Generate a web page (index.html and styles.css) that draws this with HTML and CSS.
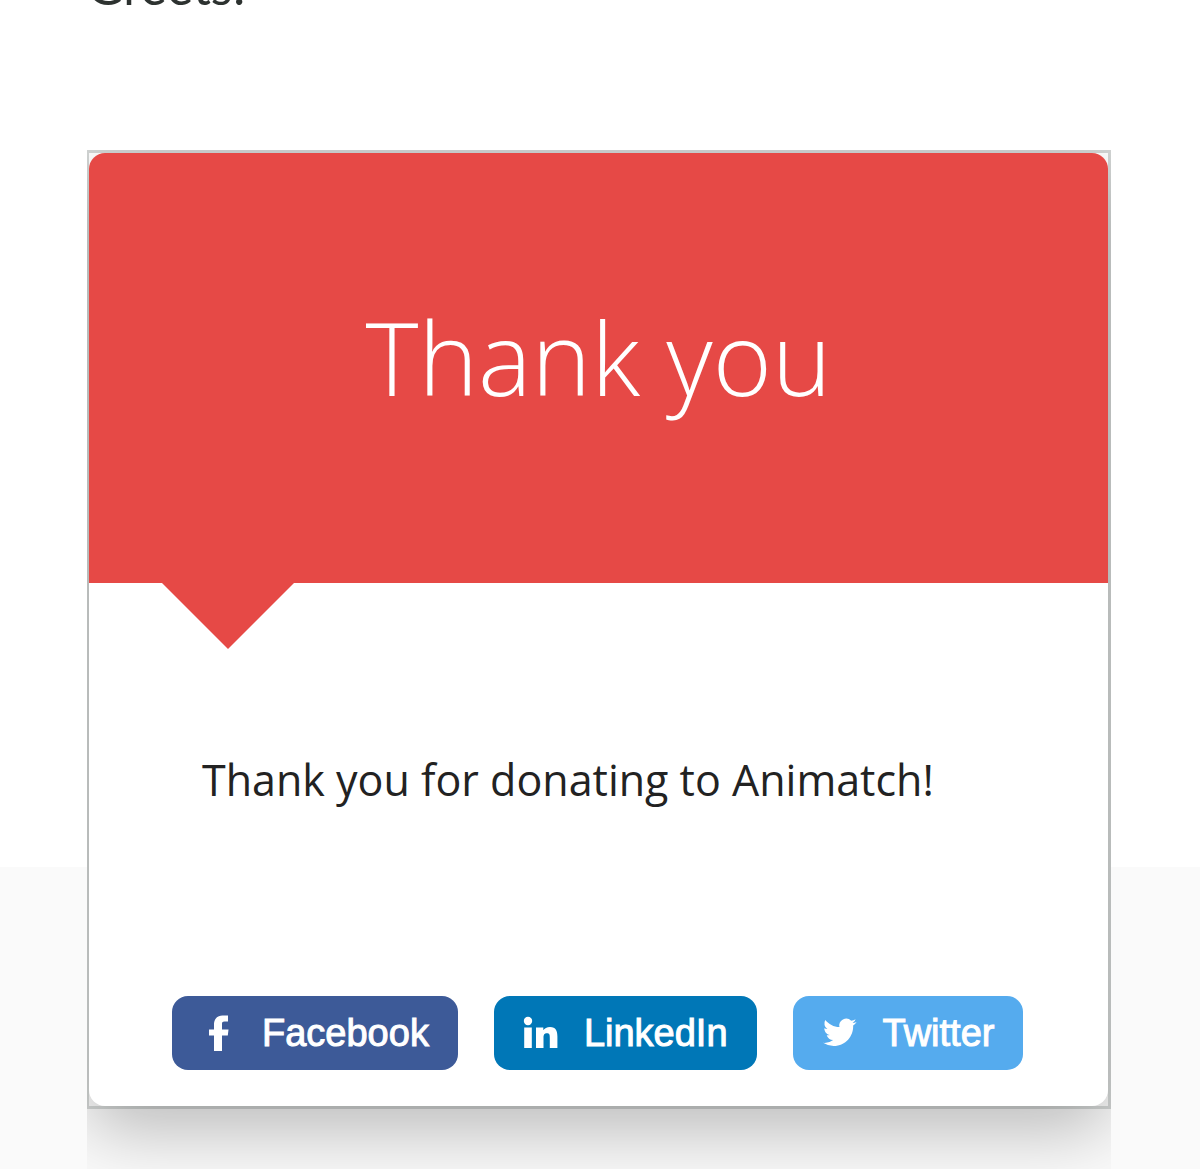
FILE: index.html
```html
<!DOCTYPE html>
<html lang="en">
<head>
<meta charset="utf-8">
<meta name="viewport" content="width=device-width, initial-scale=1">
<title>Thank you</title>
<link rel="stylesheet" href="styles.css">
</head>
<body>
<main class="page">
  <p class="closing">Greets!</p>
  <div class="embed">
    <div class="frame">
      <article class="card">
        <header class="card-header">
          <h1 class="card-title">Thank you</h1>
        </header>
        <div class="card-body">
          <p class="message">Thank you for donating to Animatch!</p>
          <nav class="share" aria-label="Share">
            <a class="share-link facebook" href="#">
              <svg class="icon" viewBox="0 0 38 38" aria-hidden="true"><path d="M14 37V21.500H9v-6h5v-4.500C14 5 17 1.500 22.500 1.500H28v6h-3.500c-2.300 0-2.500 1-2.500 2.800v5.200h6.500l-.7 6H22V37z"/></svg>
              <span>Facebook</span>
            </a>
            <a class="share-link linkedin" href="#">
              <svg class="icon" viewBox="0 0 38 38" aria-hidden="true"><circle cx="6" cy="7" r="4.200"/><path d="M2.200 13.500h7.600V34H2.200zM14 13.500h7.300v2.800c1.200-2 3.600-3.400 6.700-3.400 6 0 7.400 4.200 7.400 9.700V34h-7.600V23.800c0-2.500 0-4.600-3-4.600s-3.300 2.300-3.300 4.600V34H14z"/></svg>
              <span>LinkedIn</span>
            </a>
            <a class="share-link twitter" href="#">
              <svg class="icon" viewBox="0 0 38 38" aria-hidden="true"><g transform="translate(2 1.500) scale(1.400)"><path d="M23.950 4.570a10 10 0 0 1-2.820.77 4.960 4.960 0 0 0 2.160-2.720c-.95.550-2 .950-3.130 1.180a4.920 4.920 0 0 0-8.380 4.480C7.690 8.100 4.070 6.130 1.640 3.160a4.920 4.920 0 0 0 1.520 6.570 4.900 4.900 0 0 1-2.230-.61v.06c0 2.380 1.700 4.370 3.950 4.820a5 5 0 0 1-2.210.09 4.940 4.940 0 0 0 4.600 3.420A9.870 9.870 0 0 1 0 19.540a13.990 13.990 0 0 0 7.550 2.210c9.050 0 14-7.500 14-13.980 0-.21 0-.42-.02-.63a9.940 9.940 0 0 0 2.460-2.550z"/></g></svg>
              <span>Twitter</span>
            </a>
          </nav>
        </div>
      </article>
    </div>
  </div>
</main>
</body>
</html>
```
FILE: styles.css
```css
* {
  box-sizing: border-box;
}

body {
  margin: 0;
  background: linear-gradient(#fff 867px, #fafafa 867px);
  font-family: "Open Sans", sans-serif;
  color: #222;
}

.page {
  padding: 0 89px 0 87px;
  overflow: hidden;
}

.closing {
  margin: -44px 0 0;
  font-family: Lato, sans-serif;
  font-size: 50px;
  line-height: 60px;
  color: #2d3230;
}

/* The embed crops the card's shadow at its own edges. */
.embed {
  margin-top: 134px;
  padding-bottom: 60px;
  overflow: hidden;
}

.frame {
  border: 3px solid #d3d6d5;
  border-left-width: 2px;
}

.card {
  border-radius: 16px;
  background: #fff;
  box-shadow: 0 24px 70px rgba(0, 0, 0, 0.26);
}

.card-header {
  position: relative;
  display: flex;
  align-items: center;
  justify-content: center;
  min-height: 430px;
  padding-bottom: 22px;
  border-radius: 16px 16px 0 0;
  background: #e64946;
}

.card-header::after {
  content: "";
  position: absolute;
  top: 100%;
  left: 73px;
  border: 66px solid transparent;
  border-top-color: #e64946;
  border-bottom: 0;
}

.card-title {
  margin: 0;
  font-size: 101px;
  font-weight: 300;
  line-height: 140px;
  color: #fff;
}

.card-body {
  padding: 167px 80px 36px 83px;
}

.message {
  margin: 0 0 186px;
  padding-left: 30px;
  font-size: 43px;
  line-height: 60px;
}

.share {
  display: flex;
  flex-wrap: wrap;
  gap: 36px;
}

.share-link {
  display: flex;
  align-items: center;
  gap: 24px;
  height: 74px;
  padding: 0 29px 0 28px;
  border-radius: 16px;
  font-family: "Liberation Sans", sans-serif;
  font-size: 38px;
  line-height: 44px;
  color: #fff;
  text-decoration: none;
  -webkit-text-stroke: 1px #fff;
}

.icon {
  flex: none;
  width: 38px;
  height: 38px;
  fill: #fff;
  stroke: none;
}

.facebook {
  background: #3d5a98;
}

.linkedin {
  background: #0077b7;
}

.twitter {
  background: #55abee;
}
```
